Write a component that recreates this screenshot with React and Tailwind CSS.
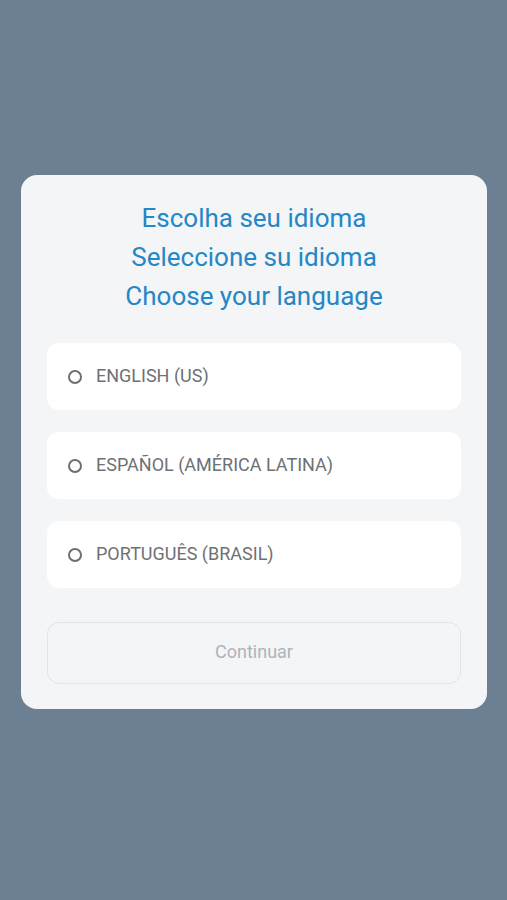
const LANGUAGES = [
  { id: 'en-US', label: 'ENGLISH (US)' },
  { id: 'es-419', label: 'ESPAÑOL (AMÉRICA LATINA)' },
  { id: 'pt-BR', label: 'PORTUGUÊS (BRASIL)' },
];

export default function App() {
  return (
    <div
      className="min-h-screen bg-[#6c7f93] pl-[21px] pr-[20px] pt-[175px]"
      style={{ fontFamily: 'Roboto, "Liberation Sans", sans-serif' }}
    >
      <div className="rounded-[16px] bg-[#f3f5f7] px-[26px] pt-[24px] pb-[25px]">
        {/* Title */}
        <div className="text-center text-[26px] leading-[39px] text-[#2487c6]">
          <div>Escolha seu idioma</div>
          <div>Seleccione su idioma</div>
          <div>Choose your language</div>
        </div>

        {/* Options */}
        <div className="mt-[27px] flex flex-col gap-[22px]">
          {LANGUAGES.map((lang) => (
            <button
              key={lang.id}
              className="flex h-[67px] w-full items-center gap-[14px] rounded-[12px] bg-white px-[21px] text-left"
            >
              <span className="h-[14px] w-[14px] rounded-full border-2 border-[#6b6e72]" />
              <span className="pb-[2px] text-[18px] text-[#6e7174]">{lang.label}</span>
            </button>
          ))}
        </div>

        {/* Continue */}
        <button className="mt-[34px] flex h-[62px] w-full items-center justify-center rounded-[12px] border border-[#e2e5e8] bg-[#f3f5f7] pb-[3px] text-[18px] text-[#b0b3b6]">
          Continuar
        </button>
      </div>
    </div>
  );
}
